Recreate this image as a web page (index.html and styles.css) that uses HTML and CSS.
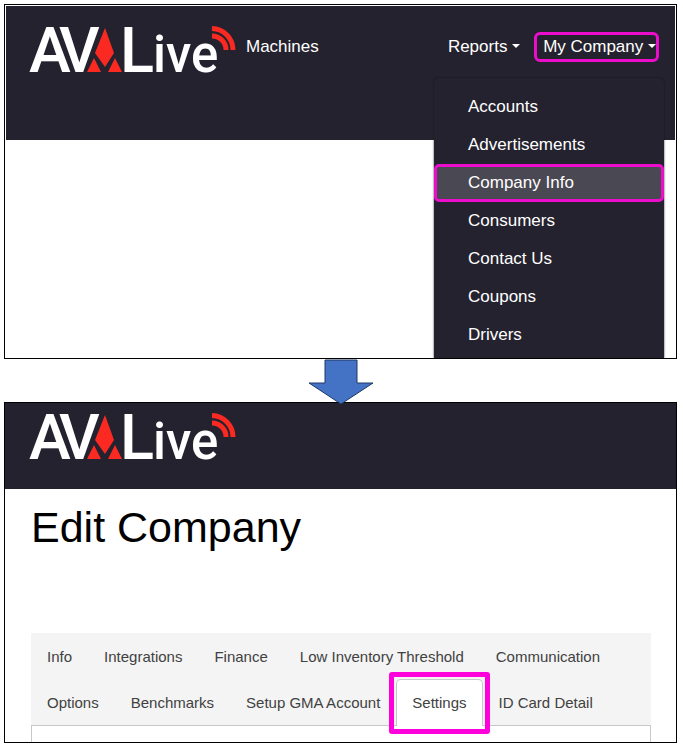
FILE: index.html
```
<!DOCTYPE html>
<html lang="en">
<head>
    <meta charset="UTF-8">
    <meta name="viewport" content="width=device-width, initial-scale=1.0">
    <title>Edit Company</title>
    <link rel="stylesheet" href="styles.css">
</head>
<body>
    <!-- Shared logo -->
    <svg class="defs" width="0" height="0" aria-hidden="true">
        <symbol id="logo" viewBox="29 7 208 80">
            <text class="logo-big" x="29" y="72">A</text>
            <text class="logo-big" x="59" y="72">V</text>
            <path fill="#fa2a22" d="M105 28l9 25-9 14-10-14zM94 58l7 14H87zM115 58l7 14h-14z"/>
            <text class="logo-big" x="120" y="72">L</text>
            <text class="logo-small" x="153" y="72">ive</text>
            <path fill="none" stroke="#fa2a22" stroke-width="5" d="M212 28.500a21.500 21.500 0 0 1 21 21.500M212 36a14 14 0 0 1 14 14"/>
        </symbol>
    </svg>

    <section class="panel">
        <header class="navbar">
            <a class="brand" href="#" aria-label="AVA Live"><svg class="logo"><use href="#logo"/></svg></a>
            <nav>
                <a class="nav-link" href="#">Machines</a>
                <button class="nav-link reports" type="button">Reports <span class="caret"></span></button>
                <button class="nav-link marked" type="button">My Company <span class="caret"></span></button>
            </nav>
        </header>
        <div class="dropdown">
            <a href="#">Accounts</a>
            <a href="#">Advertisements</a>
            <a class="selected" href="#">Company Info</a>
            <a href="#">Consumers</a>
            <a href="#">Contact Us</a>
            <a href="#">Coupons</a>
            <a href="#">Drivers</a>
        </div>
    </section>

    <svg class="arrow" viewBox="0 0 68 47" aria-hidden="true">
        <path d="M18 1h32v23h16L34 45 2 24h16z" fill="#4472c4" stroke="#1f3864" stroke-width="1"/>
    </svg>

    <section class="panel">
        <header class="navbar compact">
            <a class="brand" href="#" aria-label="AVA Live"><svg class="logo"><use href="#logo"/></svg></a>
        </header>
        <main>
            <h1>Edit Company</h1>
            <nav class="tabs">
                <a href="#">Info</a>
                <a href="#">Integrations</a>
                <a href="#">Finance</a>
                <a href="#">Low Inventory Threshold</a>
                <a href="#">Communication</a>
                <a href="#">Options</a>
                <a href="#">Benchmarks</a>
                <a href="#">Setup GMA Account</a>
                <a class="active" href="#">Settings</a>
                <a href="#">ID Card Detail</a>
            </nav>
            <div class="tab-content"></div>
        </main>
    </section>
</body>
</html>
```
FILE: styles.css
```
* {
    box-sizing: border-box;
}

body {
    margin: 0;
    padding: 4px 6px 4px 4px;
    background-color: #fff;
    font-family: "Liberation Sans", Arial, sans-serif;
}

a {
    color: inherit;
    text-decoration: none;
}

.defs {
    position: absolute;
}

.panel {
    border: 1px solid #000;
    background-color: #fff;
}

.navbar {
    display: flex;
    align-items: flex-start;
    height: 134px;
    margin: 1px 1px 0;
    padding: 1px 16px 0 23px;
    background-color: #24222e;
    color: #fff;
}

.navbar.compact {
    height: 86px;
    margin: 0;
    padding: 0 24px;
}

.compact .brand {
    margin-top: -9px;
}

.brand,
.logo {
    display: block;
    width: 208px;
    height: 80px;
}

.logo-big,
.logo-small {
    font-family: Roboto, sans-serif;
    font-size: 63px;
    font-weight: 500;
    fill: #fff;
}

.logo-small {
    font-size: 51px;
}

.navbar nav {
    display: flex;
    flex: 1;
    margin-top: 25px;
    padding-left: 9px;
}

.nav-link {
    padding: 0;
    border: 0;
    background: none;
    color: #fff;
    font-family: inherit;
    font-size: 17px;
    line-height: 30px;
    white-space: nowrap;
}

.reports {
    margin-left: auto;
    margin-right: 14px;
}

.marked {
    padding: 0 0 0 6px;
    border: 3px solid #ec0ccb;
    border-radius: 6px;
    line-height: 24px;
}

.caret {
    display: inline-block;
    border: 4px solid transparent;
    border-top-color: #fff;
    border-bottom: 0;
    vertical-align: 4px;
}

.dropdown {
    width: 230px;
    margin: -62px 12px 0 auto;
    padding: 10px 0 4px;
    border-radius: 5px 5px 0 0;
    background-color: #24222e;
    box-shadow: 0 0 2px #14131a;
    clip-path: inset(-2px -2px 0);
    color: #fff;
    font-size: 17px;
}

.dropdown a {
    display: block;
    padding: 0 34px;
    line-height: 38px;
}

.dropdown .selected {
    padding: 0 31px;
    border: 3px solid #ec0ccb;
    border-radius: 5px;
    background-color: #4a4852;
    line-height: 32px;
}

.arrow {
    display: block;
    position: relative;
    width: 68px;
    height: 47px;
    margin: 0 auto -4px;
}

main {
    padding: 0 25px 0 26px;
}

h1 {
    margin: 0 0 81px;
    padding-top: 14px;
    font-size: 43px;
    font-weight: 400;
    line-height: 49px;
}

.tabs {
    display: flex;
    flex-wrap: wrap;
    background-color: #f4f4f4;
    color: #414141;
    font-size: 15px;
}

.tabs a {
    position: relative;
    padding: 0 15px;
    border: 1px solid transparent;
    border-bottom: 0;
    line-height: 45px;
}

.tabs .active {
    margin-bottom: -1px;
    border-color: #c8c8c8;
    border-radius: 5px 5px 0 0;
    background-color: #fff;
}

.active::after {
    content: "";
    position: absolute;
    inset: -8px;
    border: 5px solid #ff00dc;
    border-radius: 3px;
}

.tab-content {
    height: 17px;
    border: 1px solid #c8c8c8;
    border-bottom: 0;
}
```
